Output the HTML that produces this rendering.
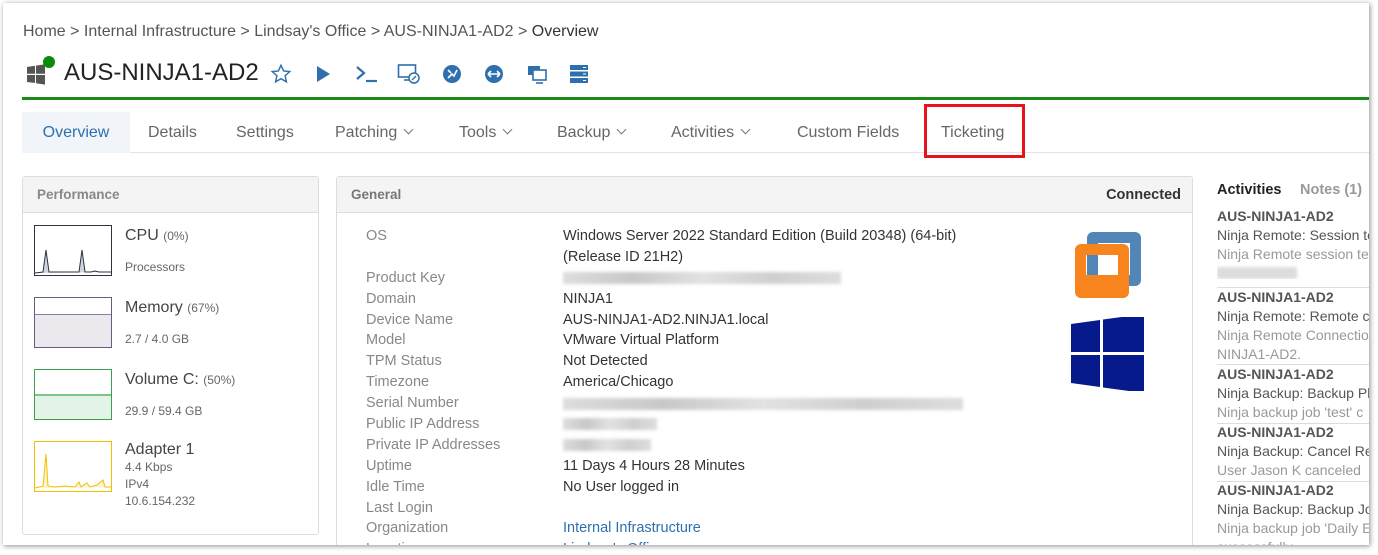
<!DOCTYPE html>
<html><head><meta charset="utf-8"><style>
*{margin:0;padding:0;box-sizing:border-box}
body{width:1378px;height:555px;background:#fff;font-family:"Liberation Sans",sans-serif;position:relative;overflow:hidden;color:#444}
.frame{position:absolute;left:3px;top:3px;width:1366px;height:542px;background:#fff;box-shadow:1px 1px 5px rgba(0,0,0,.45);overflow:hidden}
.a{position:absolute;white-space:nowrap}
.bc{left:20px;top:20px;font-size:16px;color:#555}
.bc b{font-weight:normal;color:#333}
.title{left:61px;top:56px;font-size:24px;color:#222}
.green{position:absolute;left:19px;top:94px;width:1350px;height:3px;background:#1a8a1a}
.tabs{position:absolute;left:19px;top:109px;height:41px;width:1350px;border-bottom:1px solid #e3e3e3}
.tab{position:absolute;top:0;height:41px;line-height:41px;font-size:16px;color:#666}
.chev{display:inline-block;width:7px;height:7px;border-right:1.3px solid #777;border-bottom:1.3px solid #777;transform:rotate(45deg);margin-left:8px;position:relative;top:-4px}
.panel{position:absolute;border:1px solid #ddd;border-radius:3px;background:#fff}
.ph{height:36px;background:#f4f4f4;border-bottom:1px solid #ddd;font-size:13.5px;font-weight:bold;color:#888;line-height:36px;padding-left:14px}
.chart{position:absolute;left:11px;width:78px;height:51px;border:1px solid}
.pl{position:absolute;left:102px;font-size:16px;color:#444}
.pl small{font-size:12px;color:#666}
.ps{position:absolute;left:102px;font-size:12px;color:#666;line-height:17px}
.row{position:absolute;left:29px;font-size:14.5px;color:#888;line-height:21px}
.val{position:absolute;left:226px;font-size:14.5px;color:#333;line-height:21px}
.blur{position:absolute;left:226px;height:12px;background:linear-gradient(90deg,#ddd,#c8c8c8,#e2e2e2,#cfcfcf,#ddd);filter:blur(1.5px)}
.act{position:absolute;left:1214px;font-size:14px;line-height:19px;width:160px;overflow:hidden}
.act .h{font-weight:bold;color:#555}
.act .t{color:#555}
.act .g{color:#999}
.sep{position:absolute;left:1214px;width:160px;height:1px;background:#ddd}
</style></head><body>
<div class="frame">
<div class="a bc">Home &gt; Internal Infrastructure &gt; Lindsay's Office &gt; AUS-NINJA1-AD2 &gt; <b>Overview</b></div>
<svg class="a" style="left:22px;top:52px" width="30" height="32" viewBox="0 0 30 32"><path d="M2 12l8-1.2v8H2zM11 10.6L20 9.3v9.5h-9zM2 20h8v8L2 27zM11 20h9v9.6l-9-1.3z" fill="#555"/><circle cx="24" cy="7" r="6" fill="#0a8a0a"/></svg>
<div class="a title">AUS-NINJA1-AD2</div>
<svg class="a" style="left:267px;top:60px" width="22" height="22" viewBox="0 0 24 24"><path d="M12 2.5l2.9 6.2 6.6.7-5 4.5 1.4 6.6L12 17.2l-5.9 3.3 1.4-6.6-5-4.5 6.6-.7z" fill="none" stroke="#2f6fae" stroke-width="1.6"/></svg>
<svg class="a" style="left:312px;top:61px" width="16" height="20"><path d="M2 2l13 8-13 8z" fill="#2f6fae"/></svg>
<svg class="a" style="left:352px;top:61px" width="24" height="20"><path d="M2 3l7 6-7 6" fill="none" stroke="#2f6fae" stroke-width="2.2"/><path d="M11 17h11" stroke="#2f6fae" stroke-width="2.2"/></svg>
<svg class="a" style="left:394px;top:60px" width="24" height="22"><rect x="1.5" y="2" width="17" height="12" fill="none" stroke="#2f6fae" stroke-width="1.6"/><path d="M7 17h7" stroke="#2f6fae" stroke-width="1.6"/><circle cx="17" cy="15" r="5" fill="#fff" stroke="#2f6fae" stroke-width="1.5"/><path d="M15 17l4-4" stroke="#2f6fae" stroke-width="1.3"/></svg>
<svg class="a" style="left:439px;top:61px" width="20" height="20"><circle cx="10" cy="10" r="9" fill="#2f6fae"/><path d="M6 14l4-4 2 2 3-6M6 6l3 3" stroke="#fff" stroke-width="1.6" fill="none"/></svg>
<svg class="a" style="left:481px;top:61px" width="20" height="20"><circle cx="10" cy="10" r="9" fill="#2f6fae"/><path d="M4 10h12M4 10l3-3M4 10l3 3M16 10l-3-3M16 10l-3 3" stroke="#fff" stroke-width="1.6" fill="none"/></svg>
<svg class="a" style="left:523px;top:61px" width="24" height="20"><rect x="2" y="2" width="12" height="9" fill="#2f6fae"/><rect x="7" y="6" width="13" height="10" fill="#fff" stroke="#2f6fae" stroke-width="1.6"/><path d="M10 19h7" stroke="#2f6fae" stroke-width="1.6"/></svg>
<svg class="a" style="left:566px;top:60px" width="20" height="22"><rect x="1" y="2" width="18" height="5" fill="#2f6fae"/><rect x="1" y="8.5" width="18" height="5" fill="#2f6fae"/><rect x="1" y="15" width="18" height="5" fill="#2f6fae"/><path d="M14 4.5h3M14 11h3M14 17.5h3" stroke="#fff" stroke-width="1"/></svg>
<div class="green"></div>
<div class="tabs">
<div class="tab" style="left:0;width:108px;background:#f1f5f9;color:#2f6fae;text-align:center">Overview</div>
<div class="tab" style="left:126px">Details</div>
<div class="tab" style="left:214px">Settings</div>
<div class="tab" style="left:313px">Patching<span class="chev"></span></div>
<div class="tab" style="left:437px">Tools<span class="chev"></span></div>
<div class="tab" style="left:535px">Backup<span class="chev"></span></div>
<div class="tab" style="left:649px">Activities<span class="chev"></span></div>
<div class="tab" style="left:775px">Custom Fields</div>
<div class="tab" style="left:919px">Ticketing</div>
</div>
<div class="a" style="left:921px;top:101px;width:101px;height:54px;border:3px solid #e8141b"></div>

<div class="panel" style="left:19px;top:173px;width:297px;height:359px">
<div class="ph">Performance</div>
<div class="chart" style="top:48px;border-color:#2b3340"><svg width="76" height="49"><path d="M0 47L8 46 11 24 14 46 20 46 44 46 47 24 50 46 56 46 60 45 64 46 76 46" fill="#cfd5dc" stroke="#2b3340" stroke-width="1"/></svg></div>
<div class="pl" style="top:50px">CPU <small>(0%)</small></div>
<div class="ps" style="top:82px">Processors</div>
<div class="chart" style="top:120px;border-color:#6e5a80;background:linear-gradient(#fff 16px,#8d7f9a 16px,#8d7f9a 17px,#ebe8ee 17px)"></div>
<div class="pl" style="top:122px">Memory <small>(67%)</small></div>
<div class="ps" style="top:154px">2.7 / 4.0 GB</div>
<div class="chart" style="top:192px;border-color:#3aa04a;background:linear-gradient(#fff 24px,#7cc48a 24px,#7cc48a 26px,#e4f3e7 26px)"></div>
<div class="pl" style="top:194px">Volume C: <small>(50%)</small></div>
<div class="ps" style="top:226px">29.9 / 59.4 GB</div>
<div class="chart" style="top:264px;border-color:#f0c000"><svg width="76" height="49"><path d="M0 46L8 44 11 12 13 44 20 45 30 44 40 45 44 40 46 45 52 41 55 45 62 43 68 38 70 45 76 45" fill="#fdf3cc" stroke="#f0c000" stroke-width="1"/></svg></div>
<div class="pl" style="top:264px">Adapter 1</div>
<div class="ps" style="top:282px">4.4 Kbps<br>IPv4<br>10.6.154.232</div>
</div>

<div class="panel" style="left:333px;top:173px;width:857px;height:380px">
<div class="ph" style="color:#777">General<span style="float:right;color:#333;font-size:14.5px;padding-right:11px">Connected</span></div>
<div class="row" style="top:49px">OS</div><div class="val" style="top:49px">Windows Server 2022 Standard Edition (Build 20348) (64-bit)<br>(Release ID 21H2)</div>
<div class="row" style="top:91px">Product Key</div><div class="blur" style="top:95px;width:278px"></div>
<div class="row" style="top:112px">Domain</div><div class="val" style="top:112px">NINJA1</div>
<div class="row" style="top:133px">Device Name</div><div class="val" style="top:133px">AUS-NINJA1-AD2.NINJA1.local</div>
<div class="row" style="top:153px">Model</div><div class="val" style="top:153px">VMware Virtual Platform</div>
<div class="row" style="top:174px">TPM Status</div><div class="val" style="top:174px">Not Detected</div>
<div class="row" style="top:195px">Timezone</div><div class="val" style="top:195px">America/Chicago</div>
<div class="row" style="top:216px">Serial Number</div><div class="blur" style="top:221px;width:400px"></div>
<div class="row" style="top:237px">Public IP Address</div><div class="blur" style="top:241px;width:94px"></div>
<div class="row" style="top:258px">Private IP Addresses</div><div class="blur" style="top:262px;width:88px"></div>
<div class="row" style="top:279px">Uptime</div><div class="val" style="top:279px">11 Days 4 Hours 28 Minutes</div>
<div class="row" style="top:300px">Idle Time</div><div class="val" style="top:300px">No User logged in</div>
<div class="row" style="top:321px">Last Login</div>
<div class="row" style="top:341px">Organization</div><div class="val" style="top:341px;color:#2f6fae">Internal Infrastructure</div>
<div class="row" style="top:362px">Location</div><div class="val" style="top:362px;color:#2f6fae">Lindsay's Office</div>
<svg class="a" style="left:736px;top:53px" width="70" height="70"><rect x="14" y="2" width="54" height="54" rx="6" fill="#5386b8"/><rect x="25" y="13" width="32" height="32" fill="#fff"/><path fill-rule="evenodd" d="M8 14h42a6 6 0 0 1 6 6v42a6 6 0 0 1-6 6H8a6 6 0 0 1-6-6V20a6 6 0 0 1 6-6zM13 25v20h32V25z" fill="#f7841d"/><rect x="14" y="25" width="11" height="20" fill="#5386b8"/></svg>
<svg class="a" style="left:734px;top:140px" width="74" height="74"><path d="M0 7l29-4v32H0zM32 2.5L73 -3v38H32zM0 38h29v32L0 66zM32 38h41v38l-41-5.5z" fill="#061a8c"/></svg>
</div>

<div class="a" style="left:1214px;top:179px;font-size:14.5px;font-weight:bold;color:#222">Activities</div>
<div class="a" style="left:1297px;top:179px;font-size:14.5px;font-weight:bold;color:#999">Notes (1)</div>
<div class="act" style="top:204px"><div class="h">AUS-NINJA1-AD2</div><div class="t">Ninja Remote: Session te</div><div class="g">Ninja Remote session te</div><div style="height:12px;width:80px;background:#ddd;filter:blur(1.5px);margin-top:3px"></div></div>
<div class="sep" style="top:284px"></div>
<div class="act" style="top:285px"><div class="h">AUS-NINJA1-AD2</div><div class="t">Ninja Remote: Remote c</div><div class="g">Ninja Remote Connectio</div><div class="g">NINJA1-AD2.</div></div>
<div class="sep" style="top:361px"></div>
<div class="act" style="top:362px"><div class="h">AUS-NINJA1-AD2</div><div class="t">Ninja Backup: Backup Pl</div><div class="g">Ninja backup job 'test' c</div></div>
<div class="sep" style="top:420px"></div>
<div class="act" style="top:420px"><div class="h">AUS-NINJA1-AD2</div><div class="t">Ninja Backup: Cancel Re</div><div class="g">User Jason K canceled</div></div>
<div class="sep" style="top:478px"></div>
<div class="act" style="top:478px"><div class="h">AUS-NINJA1-AD2</div><div class="t">Ninja Backup: Backup Jo</div><div class="g">Ninja backup job 'Daily E</div><div class="g">successfully</div></div>
</div>
</body></html>
